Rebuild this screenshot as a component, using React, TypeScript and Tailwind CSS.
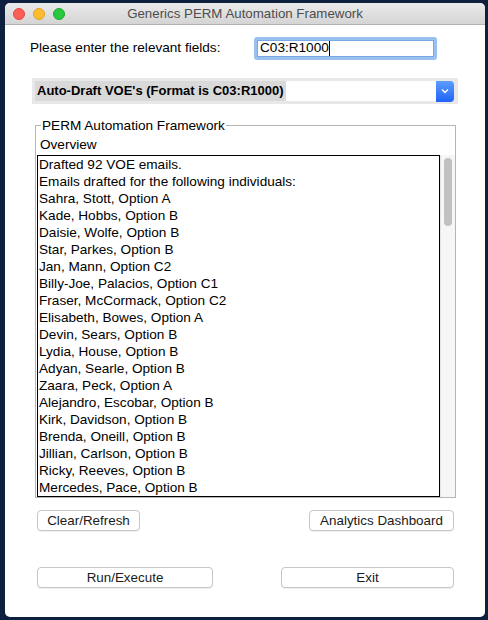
import React from 'react';

const names = [
  'Sahra, Stott, Option A',
  'Kade, Hobbs, Option B',
  'Daisie, Wolfe, Option B',
  'Star, Parkes, Option B',
  'Jan, Mann, Option C2',
  'Billy-Joe, Palacios, Option C1',
  'Fraser, McCormack, Option C2',
  'Elisabeth, Bowes, Option A',
  'Devin, Sears, Option B',
  'Lydia, House, Option B',
  'Adyan, Searle, Option B',
  'Zaara, Peck, Option A',
  'Alejandro, Escobar, Option B',
  'Kirk, Davidson, Option B',
  'Brenda, Oneill, Option B',
  'Jillian, Carlson, Option B',
  'Ricky, Reeves, Option B',
  'Mercedes, Pace, Option B',
];

function MacButton({ label, className }: { label: string; className: string }) {
  return (
    <button
      className={`h-[21px] rounded-[4px] border border-[#c6c6c6] bg-white text-[13.4px] leading-none text-[#1a1a1a] shadow-[0_1px_0_rgba(0,0,0,0.06)] ${className}`}
    >
      {label}
    </button>
  );
}

export default function App() {
  return (
    <div
      className="w-[488px] h-[620px] overflow-hidden bg-[#0e1f3f] pt-[3px] pl-[5px]"
      style={{ fontFamily: '"Liberation Sans", Arial, sans-serif' }}
    >
      <div className="w-[480px] h-[614px] rounded-[5px] bg-white overflow-hidden flex flex-col">
        {/* title bar */}
        <div className="relative h-[22px] shrink-0 bg-gradient-to-b from-[#ebebeb] to-[#d4d4d4] border-b border-[#b3b3b3] flex items-center justify-center">
          <div className="absolute left-[8px] top-[5px] flex gap-[8px]">
            <span className="w-[12px] h-[12px] rounded-full bg-[#fd5f57] border border-[#e0443e]" />
            <span className="w-[12px] h-[12px] rounded-full bg-[#febc2e] border border-[#dea123]" />
            <span className="w-[12px] h-[12px] rounded-full bg-[#28c840] border border-[#1aab29]" />
          </div>
          <span className="text-[13.3px] text-[#4d4d4d]">Generics PERM Automation Framework</span>
        </div>

        {/* entry row */}
        <div className="mt-[12px] flex items-center h-[23px]">
          <span className="ml-[25px] w-[224px] text-[13.6px] text-black">Please enter the relevant fields:</span>
          <div className="w-[183px] h-[23px] border-[3px] border-[#9ac0ef] rounded-[3px] flex items-center">
            <div className="w-full h-full border border-[#7aa7e6] bg-white flex items-center pl-[2px] text-[13.6px] text-black">
              C03:R1000<span className="w-px h-[15px] bg-black" />
            </div>
          </div>
        </div>

        {/* combo */}
        <div className="mt-[18px] ml-[27px] w-[426px] h-[26px] bg-[#e8e8e8] flex items-center pl-[3px] pr-[4px]">
          <div className="flex-1 h-[20px] bg-white flex items-center">
            <span className="h-full bg-[#d9d9d9] pl-[2px] pr-[2px] flex items-center text-[13px] font-bold text-black">
              Auto-Draft VOE's (Format is C03:R1000)
            </span>
          </div>
          <div className="w-[18px] h-[21px] rounded-r-[4px] bg-gradient-to-b from-[#5e9cff] to-[#1f62f5] flex items-center justify-center">
            <svg width="8" height="6" viewBox="0 0 8 6">
              <path d="M1 1.5 L4 4.5 L7 1.5" stroke="white" strokeWidth="1.4" fill="none" />
            </svg>
          </div>
        </div>

        {/* group box */}
        <div className="relative mt-[21px] ml-[30px] w-[421px] h-[373px] border border-[#b5b5b5] flex flex-col">
          <span className="absolute left-[5px] -top-[9px] bg-white px-px text-[13.6px] leading-[17px] text-black">
            PERM Automation Framework
          </span>
          <div className="mt-[10px] ml-[4px] text-[13.6px] leading-[17px] text-black">Overview</div>
          <div className="mt-[2px] ml-px flex flex-1 mb-px">
            <div className="w-[403px] border border-black overflow-hidden">
              <div className="pl-[1px] text-[13.6px] leading-[17px] text-black">
                <div>Drafted 92 VOE emails.</div>
                <div>Emails drafted for the following individuals:</div>
                {names.map((n) => (
                  <div key={n}>{n}</div>
                ))}
              </div>
            </div>
            <div className="w-[15px] bg-[#f6f6f6] border-l border-[#e4e4e4] pt-[3px] flex justify-center">
              <div className="w-[8px] h-[68px] rounded-full bg-[#c1c1c1]" />
            </div>
          </div>
        </div>

        {/* button rows */}
        <div className="mt-[12px] ml-[32px] w-[417px] flex justify-between">
          <MacButton label="Clear/Refresh" className="w-[103px]" />
          <MacButton label="Analytics Dashboard" className="w-[145px]" />
        </div>
        <div className="mt-[36px] ml-[32px] w-[417px] flex justify-between">
          <MacButton label="Run/Execute" className="w-[176px]" />
          <MacButton label="Exit" className="w-[173px]" />
        </div>
      </div>
    </div>
  );
}
